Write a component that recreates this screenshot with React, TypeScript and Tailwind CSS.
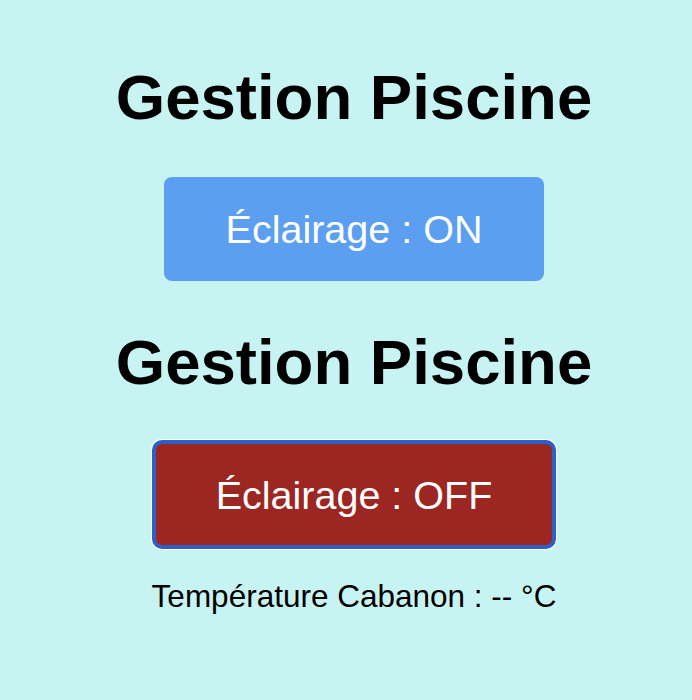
export default function App() {
  return (
    <div
      className="min-h-screen w-full bg-[#c7f4f2] flex flex-col items-center text-black pl-[16px]"
      style={{ fontFamily: '"Liberation Sans", Arial, sans-serif' }}
    >
      <h1 className="mt-[60px] text-[63.5px] leading-[74px] font-bold">Gestion Piscine</h1>
      <button className="mt-[43px] w-[380px] h-[104px] rounded-[8px] bg-[#5c9ef0] text-white text-[39.5px] leading-[46px] flex items-center justify-center">
        Éclairage : ON
      </button>
      <h1 className="mt-[44px] text-[63.5px] leading-[74px] font-bold">Gestion Piscine</h1>
      <button className="mt-[41px] w-[404px] h-[109px] rounded-[10px] border-4 border-[#2c5fc8] bg-[#9b2622] text-white text-[39.5px] leading-[46px] flex items-center justify-center shadow-[0_0_0_1px_#ffffff]">
        Éclairage : OFF
      </button>
      <p className="mt-[29px] text-[31.5px] leading-[36px]">Température Cabanon : -- °C</p>
    </div>
  );
}
